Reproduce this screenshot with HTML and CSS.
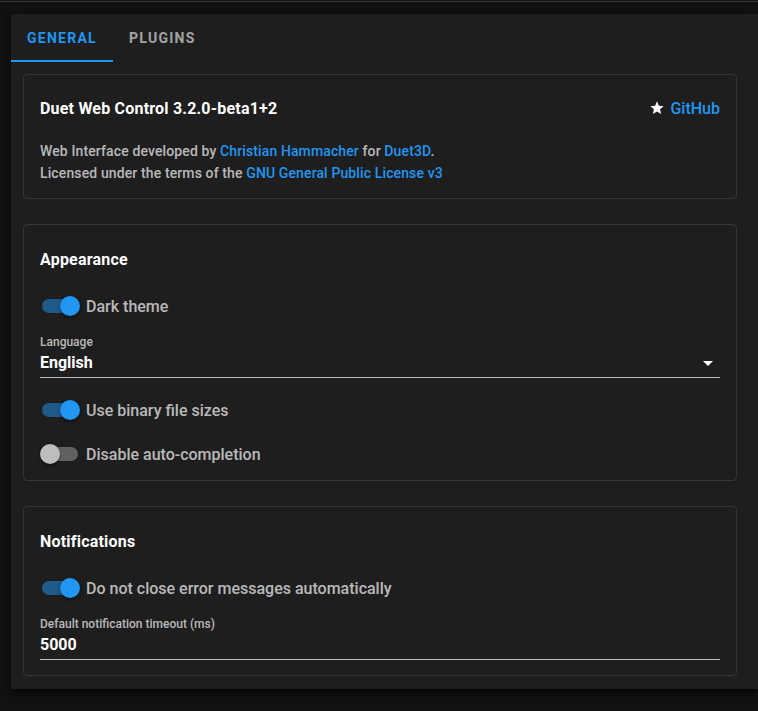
FILE: index.html
```html
<!DOCTYPE html>
<html lang="en">
<head>
<meta charset="utf-8">
<title>Settings</title>
<link rel="stylesheet" href="styles.css">
</head>
<body>
<div class="topline"></div>
<div class="sheet">
  <div class="tabs">
    <div class="tab active">General</div>
    <div class="tab">Plugins</div>
  </div>
  <div class="cards">
    <section class="card about">
      <div class="card-title">
        <span>Duet Web Control 3.2.0-beta1+2</span>
        <a class="github">
          <svg class="star" viewBox="0 0 24 24" width="16" height="16"><path fill="#fff" d="M12,17.27L18.18,21L16.54,13.97L22,9.24L14.81,8.62L12,2L9.19,8.62L2,9.24L7.45,13.97L5.82,21L12,17.27Z"/></svg>
          GitHub
        </a>
      </div>
      <p class="about-text">
        Web Interface developed by <a>Christian Hammacher</a> for <a>Duet3D</a>.<br>
        Licensed under the terms of the <a>GNU General Public License v3</a>
      </p>
    </section>

    <section class="card appearance">
      <div class="card-title">Appearance</div>
      <div class="switch-row">
        <span class="switch on"><span class="track"></span><span class="thumb"></span></span>
        <span class="switch-label">Dark theme</span>
      </div>
      <div class="field">
        <div class="field-label">Language</div>
        <div class="field-value">English
          <svg class="caret" viewBox="0 0 10 5" width="10" height="5"><path fill="#fff" d="M0 0L10 0L5 5Z"/></svg>
        </div>
      </div>
      <div class="switch-row gap20">
        <span class="switch on"><span class="track"></span><span class="thumb"></span></span>
        <span class="switch-label">Use binary file sizes</span>
      </div>
      <div class="switch-row gap20">
        <span class="switch"><span class="track"></span><span class="thumb"></span></span>
        <span class="switch-label">Disable auto-completion</span>
      </div>
    </section>

    <section class="card">
      <div class="card-title">Notifications</div>
      <div class="switch-row">
        <span class="switch on"><span class="track"></span><span class="thumb"></span></span>
        <span class="switch-label">Do not close error messages automatically</span>
      </div>
      <div class="field">
        <div class="field-label">Default notification timeout (ms)</div>
        <div class="field-value">5000</div>
      </div>
    </section>
  </div>
</div>
</body>
</html>
```

FILE: styles.css
```css
html, body {
  margin: 0;
  padding: 0;
  background: #121212;
  height: 100%;
  overflow: hidden;
}
body {
  font-family: Roboto, "Liberation Sans", sans-serif;
  color: #fff;
}
.topline {
  margin-top: 1px;
  height: 1px;
  background: #3a3a3a;
}
.sheet {
  margin: 12px 0 0 11px;
  background: #1e1e1e;
  box-shadow: 0 3px 5px -1px rgba(0,0,0,0.4), 0 5px 8px 0 rgba(0,0,0,0.3), 0 1px 14px 0 rgba(0,0,0,0.25);
  padding-bottom: 13px;
}
.tabs {
  display: flex;
  height: 48px;
}
.tab {
  box-sizing: border-box;
  height: 48px;
  padding: 0 16px;
  min-width: 90px;
  display: flex;
  align-items: center;
  justify-content: center;
  text-transform: uppercase;
  font-size: 14px;
  font-weight: 700;
  letter-spacing: 0.09em;
  color: rgba(255,255,255,0.6);
}
.tab.active {
  color: #2196f3;
  width: 102px;
  border-bottom: 2px solid #2196f3;
  padding-top: 2px;
}
.cards {
  display: flex;
  flex-direction: column;
  gap: 25px;
  padding: 12px 21px 0 12px;
}
.card {
  border: 1px solid #363636;
  border-radius: 4px;
  background: #1e1e1e;
  padding: 16px 16px 15px 16px;
  display: flex;
  flex-direction: column;
}
.card.about {
  padding-top: 15px;
  padding-bottom: 14px;
}
.card.appearance {
  padding-bottom: 14px;
}
.card-title {
  display: flex;
  align-items: center;
  justify-content: space-between;
  height: 36px;
  font-size: 16px;
  font-weight: 700;
  letter-spacing: 0.2px;
  color: #fff;
}
.github {
  display: flex;
  align-items: center;
  gap: 5px;
  color: #2196f3;
  font-weight: 500;
  font-size: 16px;
  letter-spacing: 0;
}
.star {
  display: block;
}
.about-text {
  margin: 14px 0 0;
  font-size: 14px;
  line-height: 22px;
  font-weight: 500;
  letter-spacing: 0.12px;
  color: rgba(255,255,255,0.7);
}
.about-text a {
  color: #2196f3;
}
.switch-row {
  display: flex;
  align-items: center;
  height: 24px;
  margin-top: 17px;
}
.switch-row.gap20 {
  margin-top: 20px;
}
.switch {
  position: relative;
  width: 40px;
  height: 24px;
  margin-right: 6px;
  flex: none;
}
.track {
  position: absolute;
  left: 2px;
  top: 5px;
  width: 36px;
  height: 14px;
  border-radius: 7px;
  background: rgba(255,255,255,0.3);
}
.thumb {
  position: absolute;
  left: 0;
  top: 2px;
  width: 20px;
  height: 20px;
  border-radius: 50%;
  background: #bdbdbd;
  box-shadow: 0 2px 4px -1px rgba(0,0,0,0.3), 0 1px 3px rgba(0,0,0,0.3);
}
.switch.on .track {
  background: rgba(33,150,243,0.5);
}
.switch.on .thumb {
  left: 20px;
  background: #2196f3;
}
.switch-label {
  font-size: 16px;
  font-weight: 500;
  color: rgba(255,255,255,0.7);
}
.field {
  margin-top: 16px;
}
.field-label {
  font-size: 12px;
  line-height: 16px;
  font-weight: 500;
  color: rgba(255,255,255,0.7);
}
.field-value {
  display: flex;
  align-items: center;
  justify-content: space-between;
  font-size: 16px;
  line-height: 26px;
  font-weight: 700;
  color: #fff;
  padding-bottom: 1px;
  border-bottom: 1px solid rgba(255,255,255,0.7);
}
.caret {
  margin-right: 7px;
  display: block;
}
```
